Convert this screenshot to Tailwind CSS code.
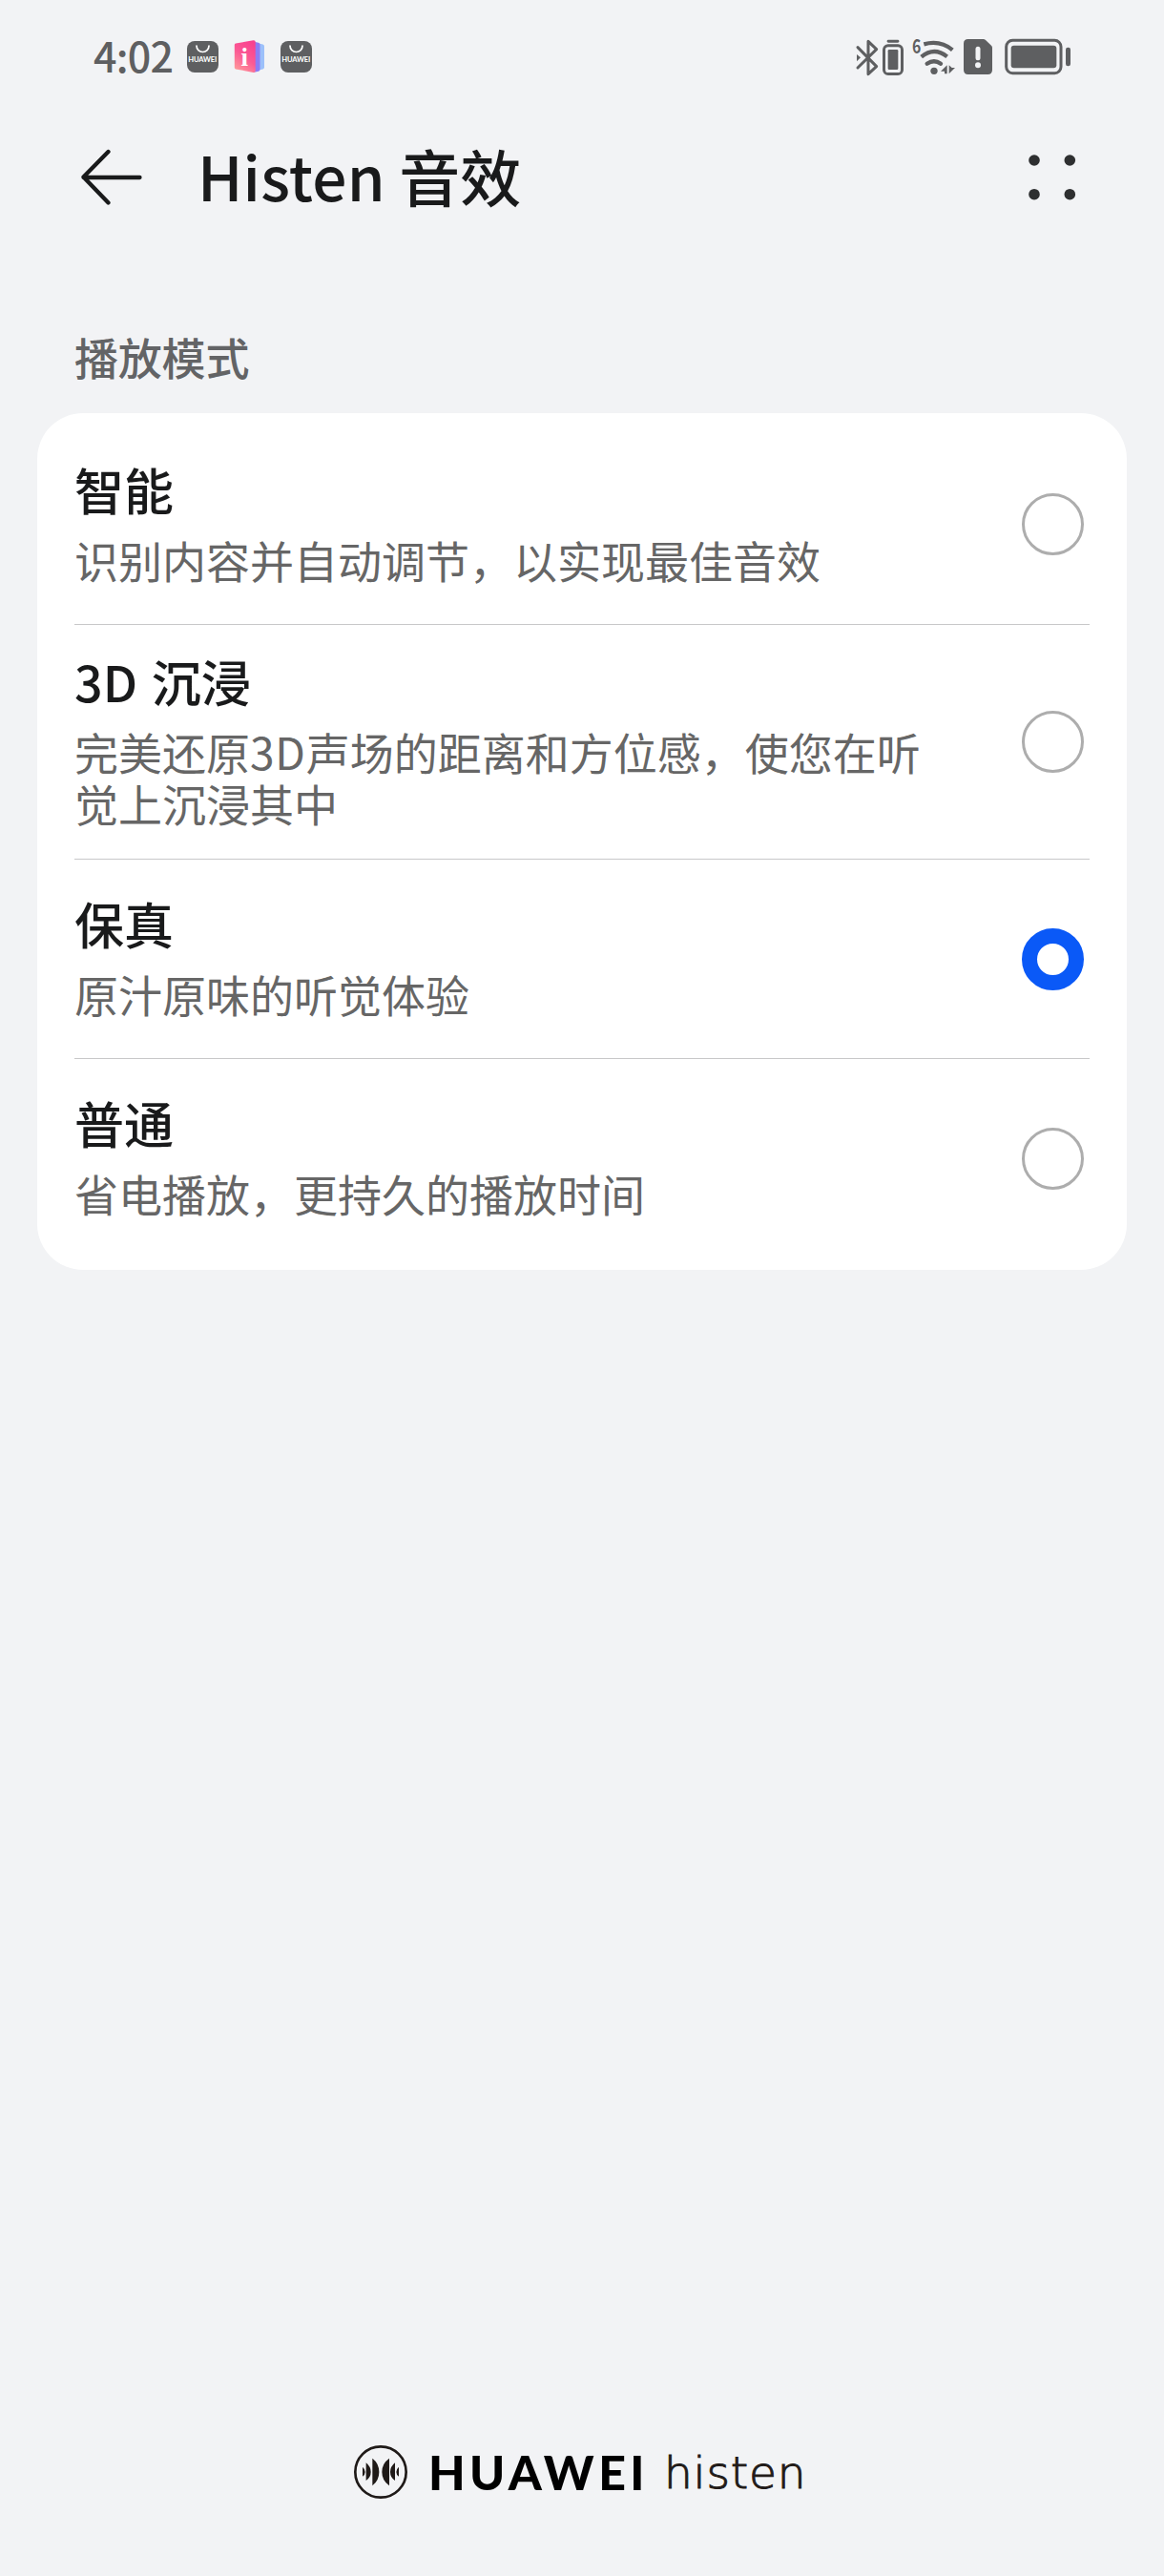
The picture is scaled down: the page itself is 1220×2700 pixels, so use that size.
<!DOCTYPE html>
<html lang="zh-CN">

<head>
    <meta charset="UTF-8" />
    <meta name="viewport" content="width=device-width, initial-scale=1.0" />
    <title>Histen 音效</title>
    <script src="https://cdn.jsdelivr.net/npm/@tailwindcss/browser@4"></script>
</head>

<body class="bg-[#f2f3f5] font-['Noto_Sans_CJK_SC',sans-serif] text-[#191a1b]">

    <div class="w-[1220px] h-[2700px] flex flex-col overflow-hidden">

        <!-- Status bar -->
        <div class="h-[120px] pl-[98px] pr-[98px] pt-10 flex justify-between items-start text-[#5e5f61]">
            <div class="flex h-10 items-start">
                <span class="w-[98px] -mt-[3px] text-[43px] leading-10 tracking-[-0.8px] font-medium whitespace-nowrap">4:02</span>
                <svg class="w-[33px] h-10" viewBox="0 0 33 40">
                    <rect y="3" width="33" height="33" rx="8" fill="currentColor" />
                    <path d="M10 8a6.5 6.5 0 0 0 13 0" fill="none" stroke="#fff" stroke-width="1.7" stroke-linecap="round" />
                    <text x="1.2" y="24.8" textLength="30" font-family="Lato" font-size="7.6" font-weight="700" fill="#fff">HUAWEI</text>
                </svg>
                <svg class="w-[33px] h-10 ml-4" viewBox="0 0 33 40">
                    <defs>
                        <linearGradient id="cover" x1="0.7" y1="0" x2="0.2" y2="1">
                            <stop offset="0" stop-color="#f9408f" />
                            <stop offset="0.5" stop-color="#fb5a94" />
                            <stop offset="1" stop-color="#ff9a9a" />
                        </linearGradient>
                    </defs>
                    <path d="M22 4.500l8.500 2q1.500 .4 1.500 2v22q0 1.600-1.500 2l-8.500 2z" fill="#9cc0fa" />
                    <path d="M20 3.500l6 1.200q1.500 .4 1.500 2v26q0 1.600-1.500 2l-6 1.300z" fill="#8d7cf5" />
                    <path d="M2 5.500l18.500-3.300q2.200-.3 2.200 1.600v30.500q0 2-2.200 1.600l-18.500-3.500q-1.200-.3-1.200-1.600v-23.700q0-1.300 1.200-1.600z" fill="url(#cover)" />
                    <text x="7.400" y="29" font-family="Liberation Serif" font-size="27" font-weight="700" fill="#fff">i</text>
                </svg>
                <svg class="w-[33px] h-10 ml-4" viewBox="0 0 33 40">
                    <rect y="3" width="33" height="33" rx="8" fill="currentColor" />
                    <path d="M10 8a6.5 6.5 0 0 0 13 0" fill="none" stroke="#fff" stroke-width="1.7" stroke-linecap="round" />
                    <text x="1.2" y="24.8" textLength="30" font-family="Lato" font-size="7.6" font-weight="700" fill="#fff">HUAWEI</text>
                </svg>
            </div>

            <div class="flex h-10">
                <!-- bluetooth -->
                <svg class="w-[26px] h-10" viewBox="48 60 78 120" fill="none" stroke="currentColor" stroke-width="9" stroke-linecap="round" stroke-linejoin="round">
                    <path d="M57 89l59 60-26 24V70l26 25-59 58" />
                    <path d="M54 111l12 10-12 12z" fill="currentColor" stroke="none" />
                </svg>
                <!-- device battery -->
                <svg class="w-[26px] h-10 ml-[2px]" viewBox="132 60 78 120">
                    <rect x="149" y="65" width="38" height="9" rx="4" fill="currentColor" />
                    <rect x="139.500" y="83.500" width="57" height="89" rx="13" fill="none" stroke="currentColor" stroke-width="9" />
                    <rect x="152" y="96" width="32" height="63" rx="4" fill="currentColor" />
                </svg>
                <!-- wifi 6 -->
                <svg class="w-[47px] h-10 ml-[5px]" viewBox="225 60 141 120" fill="none" stroke="currentColor" stroke-width="13" stroke-linecap="butt">
                    <path d="M265 79Q316 65 355 97" />
                    <path d="M257 119Q297 86 338 118" />
                    <path d="M275 140Q297 125 318 140" stroke-linecap="round" />
                    <circle cx="297" cy="163" r="11" fill="currentColor" stroke="none" />
                    <path d="M318 164l20-19v27h-8v-8zM344 145v27l19-19H353z" fill="currentColor" stroke="none" />
                    <text x="228" y="109" font-family="Noto Sans CJK SC" font-size="60" font-weight="700" fill="currentColor" stroke="none" textLength="28" lengthAdjust="spacingAndGlyphs">6</text>
                </svg>
                <!-- sim alert -->
                <svg class="w-[30px] h-10 ml-[8px]" viewBox="390 60 90 120">
                    <path d="M404 63h48q4 0 7 3l18 17q3 3 3 7v70q0 14-14 14h-62q-14 0-14-14V77q0-14 14-14z" fill="currentColor" />
                    <path d="M435 94v28" stroke="#f2f3f5" stroke-width="15" stroke-linecap="round" />
                    <circle cx="435" cy="145" r="9" fill="#f2f3f5" />
                </svg>
                <!-- battery -->
                <svg class="w-[69px] h-10 ml-[13px]" viewBox="519 60 207 120">
                    <rect x="524" y="67" width="172" height="103" rx="20" fill="none" stroke="currentColor" stroke-width="9" />
                    <rect x="539" y="83" width="143" height="71" rx="9" fill="currentColor" />
                    <rect x="711" y="89" width="15" height="59" rx="7" fill="currentColor" />
                </svg>
            </div>
        </div>

        <!-- Title bar -->
        <header class="h-[132px] pl-[84px] pr-[91px] flex items-center">
            <svg class="w-[66px] h-[60px]" viewBox="0 0 66 60" fill="none" stroke="currentColor" stroke-width="4.300" stroke-linecap="round" stroke-linejoin="round">
                <path d="M29.500 3L3.500 29.500 29.500 56.500M3.500 30h59" />
            </svg>
            <h1 class="ml-[57px] pb-[7px] text-[64px] leading-[80px] font-medium whitespace-nowrap"><span class="tracking-[0.2px]">Histen</span> 音效</h1>
            <svg class="w-[52px] h-[52px] ml-auto" viewBox="0 0 52 52" fill="#2e2f30">
                <circle cx="7" cy="8" r="5.800" />
                <circle cx="44.300" cy="8" r="5.800" />
                <circle cx="7" cy="43.700" r="5.800" />
                <circle cx="44.300" cy="43.700" r="5.800" />
            </svg>
        </header>

        <main class="px-[39px]">
            <h2 class="mt-[91px] h-[90px] pl-[39px] text-[46px] leading-[60px] tracking-[-0.2px] font-medium text-[#636466]">播放模式</h2>

            <div class="bg-white rounded-[48px] h-[898px] py-3 pl-[39px] pr-[39px]">
                <div class="h-[210px] border-b border-[#c8c8c9] flex items-center justify-between pr-[6px]">
                    <div class="pb-[5px]">
                        <h3 class="text-[52px] leading-[62px] font-medium">智能</h3>
                        <p class="mt-[15px] text-[46px] leading-[54px] text-[#666]">识别内容并自动调节，以实现最佳音效</p>
                    </div>
                    <span class="size-[65px] rounded-full border-[3px] border-[#adadad]"></span>
                </div>
                <div class="h-[246px] border-b border-[#c8c8c9] flex items-center justify-between pr-[6px]">
                    <div class="pb-[5px]">
                        <h3 class="text-[52px] leading-[62px] font-medium [word-spacing:3px]">3D 沉浸</h3>
                        <p class="mt-[15px] text-[46px] leading-[54px] text-[#666]">完美还原<span class="tracking-[0.8px]">3D</span>声场的距离和方位感，使您在听<br>觉上沉浸其中</p>
                    </div>
                    <span class="size-[65px] rounded-full border-[3px] border-[#adadad]"></span>
                </div>
                <div class="h-[209px] border-b border-[#c8c8c9] flex items-center justify-between pr-[6px]">
                    <div class="pb-[6px]">
                        <h3 class="text-[52px] leading-[62px] font-medium">保真</h3>
                        <p class="mt-[15px] text-[46px] leading-[54px] text-[#666]">原汁原味的听觉体验</p>
                    </div>
                    <span class="size-[65px] rounded-full border-[16px] border-[#0a59f7]"></span>
                </div>
                <div class="h-[209px] flex items-center justify-between pr-[6px]">
                    <div class="pb-[6px]">
                        <h3 class="text-[52px] leading-[62px] font-medium">普通</h3>
                        <p class="mt-[15px] text-[46px] leading-[54px] text-[#666]">省电播放，更持久的播放时间</p>
                    </div>
                    <span class="size-[65px] rounded-full border-[3px] border-[#adadad]"></span>
                </div>
            </div>
        </main>

        <!-- Brand -->
        <footer class="mt-auto mb-[80px] pl-[370px] h-[58px] flex items-center text-[#1f1a18]">
            <svg class="w-[58px] h-[58px]" viewBox="0 0 174 174" fill="currentColor">
                <circle cx="87" cy="87" r="80" fill="none" stroke="currentColor" stroke-width="8" />
                <path d="M61 44Q82 60 82 87T61 130zM114 44Q91 60 91 87T114 130z" />
                <path d="M41 58Q56 70 56 87T41 114zM132 58Q117 70 117 87T132 114z" />
                <path d="M30 71Q38 78 38 87T30 101zM144 71Q136 78 136 87T144 101z" />
            </svg>
            <span class="ml-[21px] w-[247px] text-[50px] leading-[58px] tracking-[4.4px] font-black font-['Lato',sans-serif] text-black">HUAWEI</span>
            <span class="pt-[2px] text-[47px] leading-[58px] tracking-[0.8px] font-extralight font-['DejaVu_Sans',sans-serif] [-webkit-text-stroke:1px_currentColor]">histen</span>
        </footer>
    </div>

</body>

</html>
